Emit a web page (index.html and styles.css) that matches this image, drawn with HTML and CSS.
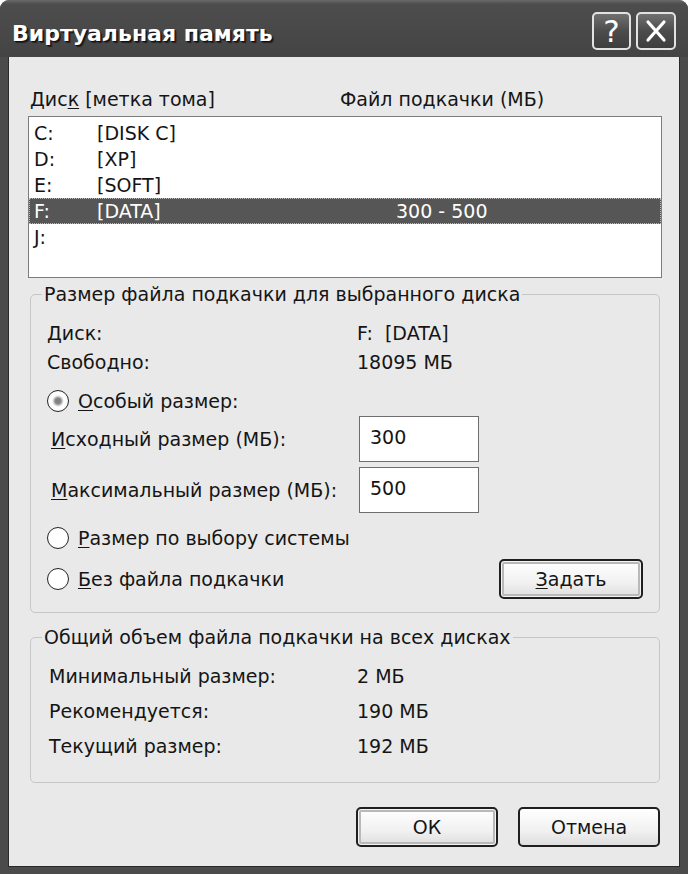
FILE: index.html
```html
<!DOCTYPE html>
<html lang="ru">
<head>
<meta charset="utf-8">
<title>Виртуальная память</title>
<link rel="stylesheet" href="styles.css">
</head>
<body>
<div class="window">
  <div class="titlebar">
    <span class="title">Виртуальная память</span>
    <div class="tb-buttons">
      <div class="tb-btn help">?</div>
      <div class="tb-btn close">
        <svg width="26" height="26" viewBox="0 0 26 26"><path d="M5 4 L21 22 M21 4 L5 22" stroke="#fff" stroke-width="3.2" stroke-linecap="round" fill="none"/></svg>
      </div>
    </div>
  </div>
  <div class="client">
    <div class="list-header">
      <span>Дис<u>к</u> [метка тома]</span>
      <span>Файл подкачки (МБ)</span>
    </div>
    <div class="listbox">
      <div class="row"><span>C:</span><span>[DISK C]</span><span></span></div>
      <div class="row"><span>D:</span><span>[XP]</span><span></span></div>
      <div class="row"><span>E:</span><span>[SOFT]</span><span></span></div>
      <div class="row selected"><span>F:</span><span>[DATA]</span><span>300 - 500</span></div>
      <div class="row"><span>J:</span><span></span><span></span></div>
    </div>

    <fieldset class="group group-drive">
      <legend>Размер файла подкачки для выбранного диска</legend>
      <div class="group-body">
        <div class="info-row"><span>Диск:</span><span>F:&nbsp; [DATA]</span></div>
        <div class="info-row second"><span>Свободно:</span><span>18095 МБ</span></div>
        <div class="radio-row first-radio"><span class="radio checked"></span><span><u>О</u>собый размер:</span></div>
        <div class="input-row"><span><u>И</u>сходный размер (МБ):</span><span class="textbox">300</span></div>
        <div class="input-row second-input"><span><u>М</u>аксимальный размер (МБ):</span><span class="textbox">500</span></div>
        <div class="radio-row system-radio"><span class="radio"></span><span><u>Р</u>азмер по выбору системы</span></div>
        <div class="radio-row last-row"><span class="radio"></span><span><u>Б</u>ез файла подкачки</span><button class="btn btn-default set-btn"><u>З</u>адать</button></div>
      </div>
    </fieldset>

    <fieldset class="group group-total">
      <legend>Общий объем файла подкачки на всех дисках</legend>
      <div class="group-body total-body">
        <div class="total-row"><span>Минимальный размер:</span><span>2 МБ</span></div>
        <div class="total-row"><span>Рекомендуется:</span><span>190 МБ</span></div>
        <div class="total-row"><span>Текущий размер:</span><span>192 МБ</span></div>
      </div>
    </fieldset>

    <div class="dialog-buttons">
      <button class="btn btn-default">ОК</button>
      <button class="btn">Отмена</button>
    </div>
  </div>
</div>
</body>
</html>
```

FILE: styles.css
```css
html, body {
  margin: 0;
  padding: 0;
  background: #ffffff;
}

body {
  font-family: "DejaVu Sans", "Noto Sans", sans-serif;
  font-size: 19px;
  color: #151515;
}

u {
  text-decoration: underline;
  text-underline-offset: 2px;
  text-decoration-thickness: 1px;
}

.window {
  width: 688px;
  height: 874px;
  box-sizing: border-box;
  background: #4b4b4b;
  border-radius: 9px 9px 0 0;
  display: flex;
  flex-direction: column;
  overflow: hidden;
}

.titlebar {
  height: 57px;
  flex: none;
  display: flex;
  align-items: flex-start;
  padding: 0 12px 0 12px;
  background: linear-gradient(#6a6a6a 0, #4d4d4d 4px, #484848 60%, #444444 100%);
}

.title {
  flex: 1;
  margin-top: 20px;
  font-weight: bold;
  font-size: 22px;
  line-height: 28px;
  color: #ffffff;
  text-shadow: 1px 1px 0 #111, 2px 2px 1px #222;
}

.tb-buttons {
  display: flex;
  gap: 5px;
  margin-top: 12px;
}

.tb-btn {
  width: 39px;
  height: 38px;
  box-sizing: border-box;
  border: 2px solid #e2e2e2;
  border-radius: 5px;
  background: linear-gradient(#707070, #4c4c4c 50%, #3e3e3e);
  color: #ffffff;
  display: flex;
  align-items: center;
  justify-content: center;
}

.tb-btn.close {
  width: 40px;
}

.help {
  font-size: 31px;
  line-height: 32px;
}

.client {
  flex: 1;
  margin: 0 8px 7px 8px;
  background: #e9e9e9;
  box-shadow: inset 1px 0 0 #2a2a2a, inset -1px 0 0 #2a2a2a, inset 0 -1px 0 #2a2a2a;
  padding: 31px 20px 0 20px;
}

.list-header {
  display: grid;
  grid-template-columns: 310px 1fr;
  padding-left: 2px;
  line-height: 22px;
  height: 22px;
}

.listbox {
  margin: 6px -2px 0 0;
  height: 162px;
  box-sizing: border-box;
  border: 1px solid #7c7c7c;
  background: #ffffff;
  padding: 3px 0;
}

.row {
  display: grid;
  grid-template-columns: 63px 299px 1fr;
  height: 26px;
  line-height: 26px;
  padding-left: 5px;
}

.row.selected {
  background: #565656;
  color: #ffffff;
  outline: 1px dotted #bdbdbd;
  outline-offset: -1px;
}

.group {
  margin: 5px 0 0 2px;
  padding: 0;
  border: 1px solid #c6c6c6;
  border-radius: 5px;
  min-width: 0;
}

.group legend {
  margin-left: 11px;
  padding: 0 2px;
  line-height: 22px;
}

.group-body {
  padding: 17px 16px 13px 16px;
}

.info-row {
  display: grid;
  grid-template-columns: 310px 1fr;
  line-height: 22px;
}

.info-row.second {
  margin-top: 7px;
}

.radio-row {
  display: flex;
  align-items: center;
  height: 24px;
}

.first-radio {
  margin-top: 16px;
}

.system-radio {
  margin-top: 13px;
}

.radio {
  width: 22px;
  height: 22px;
  box-sizing: border-box;
  border: 1.5px solid #262626;
  border-radius: 50%;
  background: radial-gradient(circle at 50% 50%, #ffffff 60%, #e6e6e6 100%);
  margin-right: 9px;
  flex: none;
}

.radio.checked {
  background: radial-gradient(circle at 50% 50%, #7a7a7a 0, #8a8a8a 3px, #cfcfcf 4.5px, #ffffff 6px, #ffffff 60%, #e6e6e6 100%);
}

.input-row {
  display: grid;
  grid-template-columns: 308px 120px;
  align-items: center;
  padding-left: 4px;
  margin-top: 3px;
  height: 46px;
}

.input-row.second-input {
  margin-top: 5px;
}

.textbox {
  height: 46px;
  box-sizing: border-box;
  border: 1px solid #6e6e6e;
  background: #ffffff;
  padding-left: 10px;
  line-height: 40px;
}

.last-row {
  margin-top: 9px;
  height: 40px;
}

.btn {
  width: 142px;
  height: 40px;
  box-sizing: border-box;
  border: 2px solid #1f1f1f;
  border-radius: 5px;
  background: linear-gradient(#ffffff, #f1f1f1 60%, #dedede);
  font-family: inherit;
  font-size: 19px;
  color: #151515;
  padding: 0;
}

.btn-default {
  box-shadow: inset 0 0 0 1px #f4f4f4, inset 0 0 0 3px #b9b9b9;
}

.set-btn {
  margin-left: auto;
  width: 144px;
}

.group-total {
  margin-top: 13px;
}

.total-body {
  padding: 17px 16px 25px 18px;
}

.total-row {
  display: grid;
  grid-template-columns: 308px 1fr;
  line-height: 22px;
}

.total-row + .total-row {
  margin-top: 13px;
}

.dialog-buttons {
  display: flex;
  justify-content: flex-end;
  gap: 20px;
  margin-top: 24px;
}
```
